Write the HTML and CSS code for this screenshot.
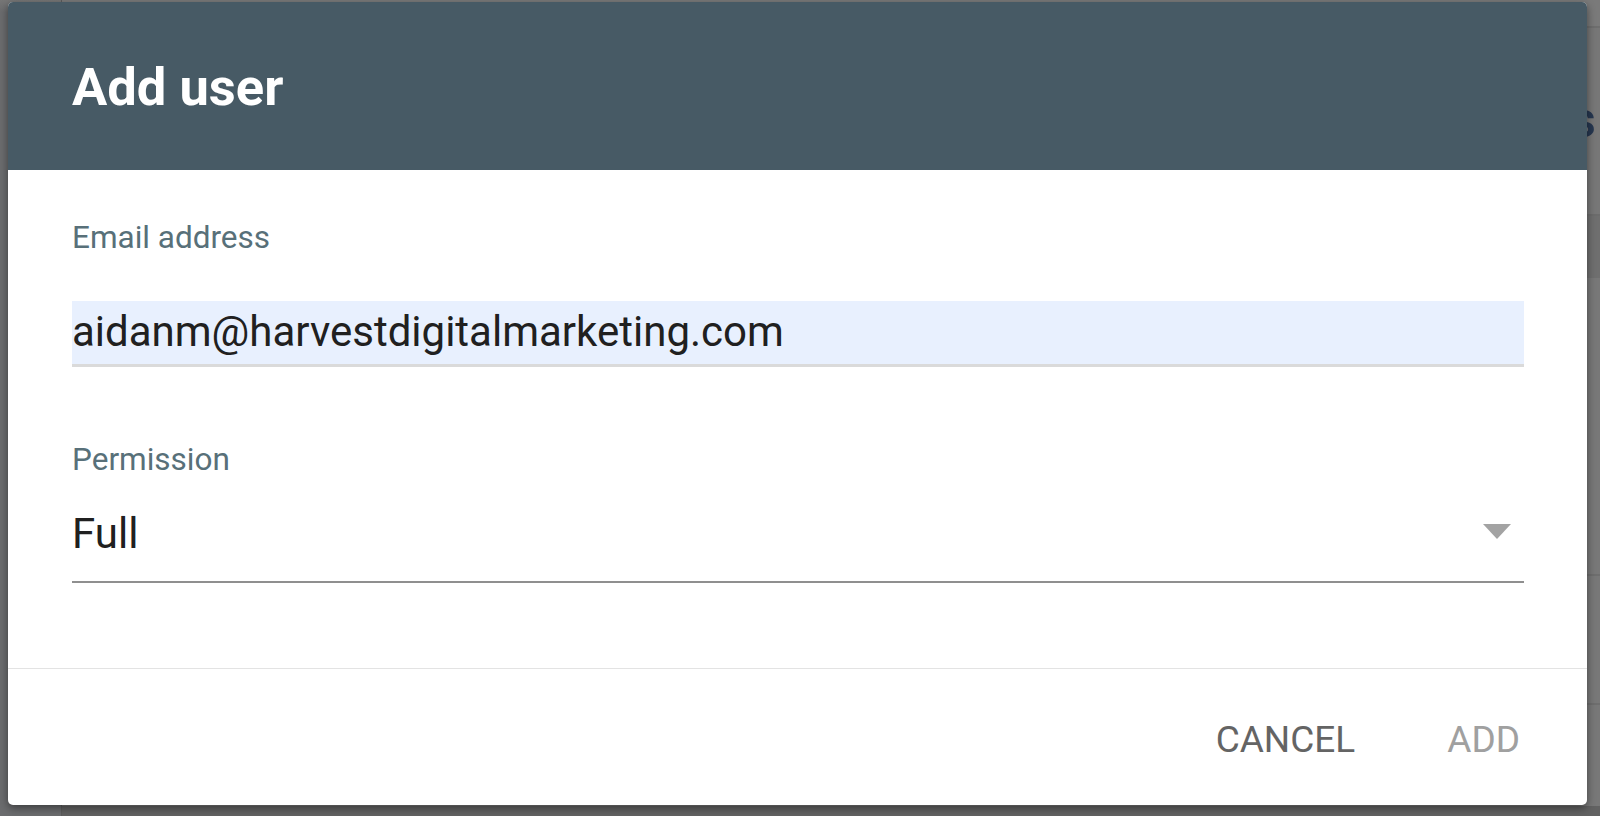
FILE: index.html
```html
<!DOCTYPE html>
<html lang="en">
<head>
<meta charset="utf-8">
<title>Add user</title>
<link rel="stylesheet" href="styles.css">
</head>
<body>
  <div class="page">
    <aside class="sidebar"></aside>
    <main class="main">
      <div class="topbar"></div>
      <div class="header-row"><span class="page-title">Users</span></div>
      <div class="row row-dark"></div>
      <div class="row row-tall"></div>
      <div class="row row-mid"></div>
      <div class="row row-last"></div>
      <div class="bottom-band"></div>
    </main>
  </div>

  <div class="dialog" role="dialog" aria-labelledby="dlg-title">
    <header class="dialog-header">
      <h1 id="dlg-title" class="dialog-title">Add user</h1>
    </header>
    <section class="dialog-body">
      <label class="field-label" for="email">Email address</label>
      <div class="text-field">
        <span id="email" class="field-value">aidanm@harvestdigitalmarketing.com</span>
      </div>
      <div class="field-label perm-label">Permission</div>
      <div class="select-field">
        <span class="field-value">Full</span>
        <svg class="select-arrow" width="28" height="15" viewBox="0 0 28 15" aria-hidden="true">
          <polygon points="0,0 28,0 14,15" fill="#a3a3a3"/>
        </svg>
      </div>
    </section>
    <footer class="dialog-footer">
      <button class="btn btn-cancel" type="button">CANCEL</button>
      <button class="btn btn-add" type="button" disabled>ADD</button>
    </footer>
  </div>
</body>
</html>
```
FILE: styles.css
```css
* { box-sizing: border-box; }

html, body {
  margin: 0;
  padding: 0;
  width: 1600px;
  height: 816px;
  overflow: hidden;
}

body {
  position: relative;
  font-family: Roboto, "Liberation Sans", Arial, sans-serif;
  background: #767676;
}

/* ---------- dimmed page behind the dialog ---------- */
.page {
  display: flex;
  width: 1600px;
  height: 816px;
}

.sidebar {
  width: 62px;
  flex: none;
  background: linear-gradient(#767676 0, #6b6c6e 12px, #6b6c6e 100%);
  border-right: 1px solid #5c5c5c;
}

.main {
  flex: 1;
  display: flex;
  flex-direction: column;
  background: #777777;
}

.topbar {
  height: 28px;
  background: #7a7a7a;
  border-bottom: 2px solid #6e6e6e;
}

.header-row {
  height: 188px;
  display: flex;
  justify-content: flex-end;
  align-items: center;
  padding-bottom: 2px;
  padding-right: 4px;
  border-bottom: 2px solid #6c6c6c;
  overflow: hidden;
}

.page-title {
  font-size: 50px;
  font-weight: 500;
  color: #263750;
}

.row { background: #787878; }
.row-dark { height: 62px; background: #6f6f6f; }
.row-tall { height: 298px; border-bottom: 2px solid #6e6e6e; }
.row-mid { height: 129px; border-bottom: 2px solid #6e6e6e; }
.row-last { flex: 1; }

.bottom-band {
  height: 10px;
  background: #626262;
}

/* ---------- dialog ---------- */
.dialog {
  position: absolute;
  left: 8px;
  top: 2px;
  width: 1579px;
  height: 803px;
  display: flex;
  flex-direction: column;
  background: #ffffff;
  border-radius: 5px;
  overflow: hidden;
  box-shadow: 0 3px 8px rgba(0, 0, 0, 0.45);
}

.dialog-header {
  background: #475a65;
  padding: 59px 64px 57px;
}

.dialog-title {
  margin: 0;
  font-size: 52.5px;
  line-height: 52px;
  font-weight: 700;
  color: #ffffff;
}

.dialog-body {
  display: flex;
  flex-direction: column;
  padding: 52px 63px 85px 64px;
  border-bottom: 1px solid #e3e3e3;
}

.field-label {
  display: block;
  font-size: 31.5px;
  line-height: 31px;
  color: #587079;
}

.perm-label {
  margin-top: 77px;
}

.text-field {
  margin-top: 48px;
  height: 66px;
  padding-top: 3px;
  background: #e8f0fe;
  border-bottom: 3px solid #dadada;
}

.field-value {
  display: block;
  font-size: 42px;
  line-height: 56px;
  color: #202020;
}

.select-field {
  margin-top: 31px;
  display: flex;
  justify-content: space-between;
  align-items: flex-start;
  padding-bottom: 19px;
  border-bottom: 2px solid #8f8f8f;
}

.select-arrow {
  margin-top: 18px;
  margin-right: 13px;
}

.dialog-footer {
  flex: 1;
  display: flex;
  justify-content: flex-end;
  align-items: flex-start;
  gap: 50px;
  padding: 53px 46px 0 0;
}

.btn {
  font-family: Roboto, "Liberation Sans", Arial, sans-serif;
  font-size: 37px;
  line-height: 36px;
  font-weight: 400;
  background: transparent;
  border: 0;
  padding: 0 21px;
  margin: 0;
  cursor: pointer;
}

.btn-cancel { color: #646464; }
.btn-add { color: #a0a0a0; cursor: default; }
```
